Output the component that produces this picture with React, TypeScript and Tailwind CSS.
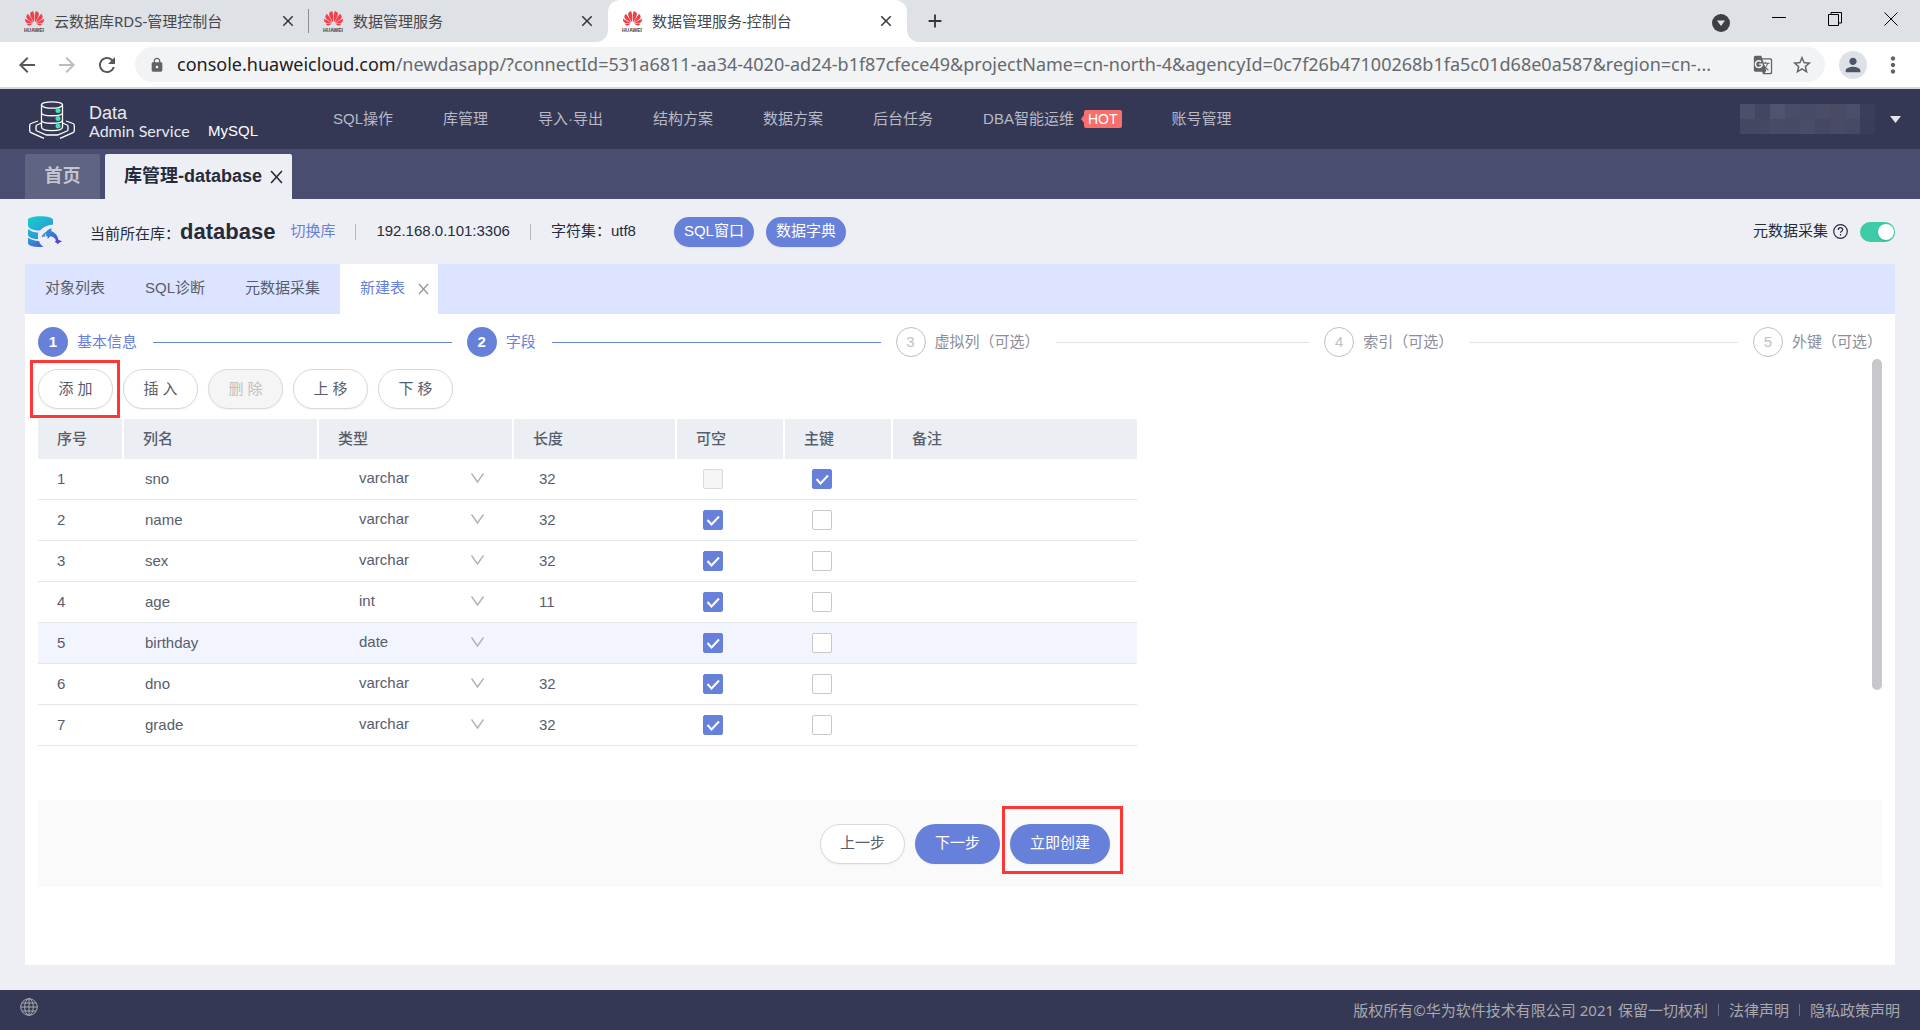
import { useState, type ReactNode } from 'react'
import { SiHuawei } from 'react-icons/si'
import {
  MdAdd,
  MdArrowBack,
  MdArrowForward,
  MdClose,
  MdGTranslate,
  MdLock,
  MdMoreVert,
  MdPerson,
  MdRefresh,
  MdStarBorder,
} from 'react-icons/md'

type Column = {
  name: string
  type: string
  length: string
  nullable: boolean
  primary: boolean
}

const initialColumns: Column[] = [
  { name: 'sno', type: 'varchar', length: '32', nullable: false, primary: true },
  { name: 'name', type: 'varchar', length: '32', nullable: true, primary: false },
  { name: 'sex', type: 'varchar', length: '32', nullable: true, primary: false },
  { name: 'age', type: 'int', length: '11', nullable: true, primary: false },
  { name: 'birthday', type: 'date', length: '', nullable: true, primary: false },
  { name: 'dno', type: 'varchar', length: '32', nullable: true, primary: false },
  { name: 'grade', type: 'varchar', length: '32', nullable: true, primary: false },
]

const steps = ['基本信息', '字段', '虚拟列（可选）', '索引（可选）', '外键（可选）']

function HuaweiMark() {
  return (
    <span className="flex w-5 shrink-0 flex-col items-center">
      <SiHuawei className="h-[19px] w-[19px] text-[#f0414b]" />
      <span className="font-['Liberation_Sans',sans-serif] text-[5px] leading-[5px] font-bold text-[#4a3c40]">HUAWEI</span>
    </span>
  )
}

function BrowserTab({ title, active, divider }: { title: string; active?: boolean; divider?: boolean }) {
  return (
    <div className={active ? 'relative flex w-[299px] items-center rounded-t-xl bg-white pl-[14px]' : 'relative flex w-[299px] items-center pl-[14px]'}>
      {active && (
        <>
          <svg className="absolute bottom-0 -left-3 h-3 w-3 text-white" viewBox="0 0 12 12">
            <path d="M12 0v12H0A12 12 0 0 0 12 0z" fill="currentColor" />
          </svg>
          <svg className="absolute -right-3 bottom-0 h-3 w-3 text-white" viewBox="0 0 12 12">
            <path d="M0 0v12h12A12 12 0 0 1 0 0z" fill="currentColor" />
          </svg>
        </>
      )}
      <HuaweiMark />
      <span className="ml-[10px] flex-1 text-[15px] text-[#45494d]">{title}</span>
      <button aria-label="关闭标签页" className="mr-[12px] text-[#33373a]">
        <MdClose className="h-[18px] w-[18px]" />
      </button>
      {divider && <span className="absolute right-0 h-6 w-px bg-[#8a8d91]" />}
    </div>
  )
}

function Browser() {
  return (
    <div className="border-b-2 border-[#d6d6d8] bg-white">
      <div className="flex h-[42px] bg-[#dee1e6] pl-[10px]">
        <BrowserTab title="云数据库RDS-管理控制台" divider />
        <BrowserTab title="数据管理服务" />
        <BrowserTab title="数据管理服务-控制台" active />
        <button aria-label="新标签页" className="ml-[17px] text-[#33373a]">
          <MdAdd className="h-[22px] w-[22px]" />
        </button>
        <div className="ml-auto flex items-center gap-[42px] pr-[22px] pb-1">
          <button aria-label="搜索标签页" className="mt-2">
            <svg className="h-[18px] w-[18px]" viewBox="0 0 18 18">
              <circle cx="9" cy="9" r="9" fill="#3c4043" />
              <path d="M5 6.500h8L9 12z" fill="#dee1e6" />
            </svg>
          </button>
          <button aria-label="最小化">
            <svg className="h-[14px] w-[14px]" viewBox="0 0 14 14" stroke="#000">
              <path d="M0 5.500h14" />
            </svg>
          </button>
          <button aria-label="还原">
            <svg className="h-[14px] w-[14px]" viewBox="0 0 14 14" fill="none" stroke="#000">
              <path d="M.5 2.500h10v11H.5zM3 2.500v-2h10.500V11H11" />
            </svg>
          </button>
          <button aria-label="关闭">
            <svg className="h-[14px] w-[14px]" viewBox="0 0 14 14" stroke="#000">
              <path d="M.5.5l13 13M13.500.5l-13 13" />
            </svg>
          </button>
        </div>
      </div>
      <div className="flex h-[45px] items-center pl-[15px]">
        <button aria-label="后退" className="text-[#55595e]">
          <MdArrowBack className="h-6 w-6" />
        </button>
        <button aria-label="前进" className="ml-4 text-[#babcbe]">
          <MdArrowForward className="h-6 w-6" />
        </button>
        <button aria-label="刷新" className="ml-4 text-[#55595e]">
          <MdRefresh className="h-6 w-6" />
        </button>
        <div className="ml-4 flex h-[35px] min-w-0 flex-1 items-center rounded-full bg-[#f1f3f4] pr-[12px] pl-[14px] text-[#5f6368]">
          <MdLock className="h-4 w-4 shrink-0" />
          <span className="ml-[12px] min-w-0 flex-1 truncate text-[18px] text-[#666a6e]">
            <span className="text-[#202124]">console.huaweicloud.com</span>
            /newdasapp/?connectId=531a6811-aa34-4020-ad24-b1f87cfece49&amp;projectName=cn-north-4&amp;agencyId=0c7f26b47100268b1fa5c01d68e0a587&amp;region=cn-...
          </span>
          <button aria-label="翻译此页">
            <MdGTranslate className="h-5 w-5" />
          </button>
          <button aria-label="收藏" className="ml-[18px]">
            <MdStarBorder className="h-[22px] w-[22px]" />
          </button>
        </div>
        <button aria-label="用户" className="ml-[14px] flex h-7 w-7 items-center justify-center rounded-full bg-[#dee1e6] text-[#4c5669]">
          <MdPerson className="h-[22px] w-[22px]" />
        </button>
        <button aria-label="更多" className="mr-[14px] ml-[13px] text-[#5f6368]">
          <MdMoreVert className="h-[26px] w-[26px]" />
        </button>
      </div>
    </div>
  )
}

function DasLogo() {
  return (
    <svg className="mt-[2px] h-[38px] w-[46px]" viewBox="0 0 46 38" fill="none" stroke="#fff" strokeWidth="1.300">
      <ellipse cx="23" cy="4" rx="10.500" ry="3.200" />
      <path d="M12.500 4v22c0 4.700 21 4.700 21 0V4M12.500 11.500c0 4.300 21 4.300 21 0M12.500 19c0 4.300 21 4.300 21 0" />
      <path d="M9 20l-7 2.500q-1.300.5-1.300 2v5q0 1.500 1.300 2.200L15 37.300M37 20l7 2.500q1.300.5 1.300 2v5q0 1.500-1.300 2.200L31 37.300" />
      <path d="M12.500 22L8 24q-1 .5-1 1.500v3q0 1 1 1.500l9.500 4h11L38 30q1-.5 1-1.500v-3q0-1-1-1.500l-4.500-2" />
      <g fill="#45e0b8" stroke="none">
        <circle cx="29" cy="9.500" r="2.500" />
        <circle cx="29" cy="17.500" r="2.500" />
        <circle cx="29" cy="25" r="2.500" />
      </g>
    </svg>
  )
}

// tiles of the pixelated account name, row by row
const mosaic = [
  ['bg-[#4c4f6b]', 'bg-[#434661]', 'bg-[#50536f]', 'bg-[#4a4c68]', 'bg-[#484a66]', 'bg-[#4a4d69]', 'bg-[#4b4a63]', 'bg-[#4b4e6a]', 'bg-[#3b3e5a]'],
  ['bg-[#444762]', 'bg-[#454862]', 'bg-[#484b66]', 'bg-[#474a65]', 'bg-[#4a4d68]', 'bg-[#454863]', 'bg-[#484b65]', 'bg-[#464964]', 'bg-[#3a3d59]'],
]

function TopNav() {
  return (
    <header className="flex h-[60px] items-center bg-[#343854] pr-[19px] pl-[29px] font-['Liberation_Sans','Noto_Sans_CJK_SC',sans-serif] text-[15px] text-[#b9bac5]">
      <DasLogo />
      <div className="ml-[14px] pt-[6px]">
        <p className="text-[18px] leading-[18px] text-[#e8e8ee]">Data</p>
        <p className="w-[119px] font-[Lato,sans-serif] text-[16px] leading-[18px] text-[#e8e8ee]">Admin Service</p>
      </div>
      <span className="mt-[24px] text-white">MySQL</span>
      <nav className="ml-[75px] flex items-center gap-[50px]">
        <a href="#sql">SQL操作</a>
        <a href="#db">库管理</a>
        <a href="#io">导入·导出</a>
        <a href="#structure">结构方案</a>
        <a href="#data">数据方案</a>
        <a href="#jobs">后台任务</a>
        <a href="#dba" className="flex items-center">
          DBA智能运维
          <span className="ml-[7px] h-0 w-0 border-y-4 border-r-3 border-y-transparent border-r-[#fa6e6b]" />
          <span className="rounded-xs bg-[#fa6e6b] px-1 text-[14px] leading-[18px] text-white">HOT</span>
        </a>
        <a href="#account">账号管理</a>
      </nav>
      <button aria-label="账号" className="ml-auto flex items-center">
        <span className="grid grid-cols-9">
          {mosaic.flat().map((tile, i) => (
            <span key={i} className={`h-[15px] w-[15px] ${tile}`} />
          ))}
        </span>
        <svg className="ml-[15px] h-[7px] w-[11px]" viewBox="0 0 11 7">
          <path d="M0 0h11L5.500 7z" fill="#e4e4ea" />
        </svg>
      </button>
    </header>
  )
}

function Cross({ className }: { className: string }) {
  return (
    <svg className={className} viewBox="0 0 12 14" fill="none" stroke="currentColor" strokeWidth="1.400" preserveAspectRatio="none">
      <path d="M1 1l10 12M11 1L1 13" />
    </svg>
  )
}

function PageTabs() {
  return (
    <div className="flex h-[50px] items-end gap-[5px] bg-[#494e70] pl-[25px] text-[18px] font-bold">
      <button className="h-[45px] w-[75px] rounded-t-xs bg-[#5f6482] text-[#c3c5d0]">首页</button>
      <div className="flex h-[45px] w-[187px] items-center justify-between rounded-t-xs bg-[#eeeff5] pr-[9px] pl-[19px] text-[#252b3a]">
        库管理-database
        <button aria-label="关闭">
          <Cross className="h-[14px] w-[13px]" />
        </button>
      </div>
    </div>
  )
}

function DolphinIcon() {
  return (
    <svg className="h-[32px] w-[34px]" viewBox="0 0 34 32">
      <defs>
        <linearGradient id="dolphin" gradientUnits="userSpaceOnUse" x1="4" y1="0" x2="22" y2="32">
          <stop offset="0" stopColor="#12cfcc" />
          <stop offset=".5" stopColor="#2d9fd6" />
          <stop offset="1" stopColor="#5340cf" />
        </linearGradient>
      </defs>
      <g fill="url(#dolphin)">
        <path d="M0 4C0-1 25-1 25 4v4.500C19 9 15 11 12 14.500 6 14.500 0 12.500 0 9.500z" />
        <path d="M0 13c3 2.500 6 3.300 10.500 3.800-.8 2.200-.8 4-.3 6.200C4 23 0 21 0 18.500z" />
        <path d="M0 21.500c3 2.500 6.500 3.200 11 3.400.8 2.500 2 4.100 4.500 6.100C7 31.500 0 30 0 27z" />
        <path d="M13.500 21.500c.5-2.500 2-4.500 4.500-5.500 1-2 3.500-3.300 6-3.500-.6 1-.8 1.700-.7 2.500 4 1.500 6.500 4.500 7.200 9 1.500.2 2.700.8 3.500 2-1.700 0-3.200.4-4.300 2.500-.6-1.400-1.700-2.300-3.200-2.500l1.500-1.500c-1-2.500-3-4-6-4.200-1 1.500-1.500 2.400-2.500 2.700.2-1 .2-1.900 0-2.700-2 0-4 .2-6 1.200z" />
      </g>
      <circle cx="17.500" cy="19" r=".8" fill="#fff" />
    </svg>
  )
}

function InfoBar({ collecting, onToggle }: { collecting: boolean; onToggle: () => void }) {
  return (
    <div className="flex h-[65px] items-center pl-[3px] text-[15px] text-[#252b3a]">
      <DolphinIcon />
      <div className="ml-[28px] flex items-baseline">
        <span className="w-[90px]">当前所在库：</span>
        <b className="text-[22px]">database</b>
      </div>
      <a href="#switch" className="ml-[15px] text-[#6781da]">切换库</a>
      <span className="mx-5 h-4 w-px bg-[#b4b6be]" />
      <span>192.168.0.101:3306</span>
      <span className="mx-5 h-4 w-px bg-[#b4b6be]" />
      <span>字符集：utf8</span>
      <button className="ml-[38px] h-[30px] w-[80px] rounded-full bg-[#6781da] text-white shadow-xs">SQL窗口</button>
      <button className="ml-[12px] h-[30px] w-[80px] rounded-full bg-[#6781da] text-white shadow-xs">数据字典</button>
      <label htmlFor="collect" className="ml-auto">元数据采集</label>
      <svg className="ml-[5px] h-[15px] w-[15px]" viewBox="0 0 15 15" fill="none" stroke="#252b3a" strokeWidth="1.200">
        <circle cx="7.500" cy="7.500" r="6.800" />
        <path d="M5.300 6c0-3 4.400-3 4.400-.3 0 1.500-2.200 1.500-2.200 3.100M7.500 10v1.400" />
      </svg>
      <span className="relative ml-[12px] flex">
        <input
          id="collect"
          type="checkbox"
          role="switch"
          checked={collecting}
          onChange={onToggle}
          className="peer h-5 w-[35px] appearance-none rounded-full bg-[#b4b6be] checked:bg-[#3dcca6]"
        />
        <span className="pointer-events-none absolute top-[2px] left-[2px] h-4 w-4 rounded-full bg-white shadow-sm peer-checked:left-[18px]" />
      </span>
    </div>
  )
}

function SubTabs() {
  return (
    <div className="flex h-[50px] bg-[#dde4ff] text-[15px] text-[#575d6c]">
      <button className="px-5 pb-[2px]">对象列表</button>
      <button className="px-5 pb-[2px]">SQL诊断</button>
      <button className="px-5 pb-[2px]">元数据采集</button>
      <div className="flex items-center bg-white pr-[9px] pb-[2px] pl-5 text-[#6781da]">
        新建表
        <button aria-label="关闭" className="mt-[2px] ml-[13px] text-[#8a8e99]">
          <Cross className="h-[12px] w-[11px]" />
        </button>
      </div>
    </div>
  )
}

function Steps({ current }: { current: number }) {
  return (
    <ol className="flex text-[15px]">
      {steps.map((title, i) => {
        const done = i <= current
        const last = i === steps.length - 1
        return (
          <li key={title} className={last ? 'flex items-center text-[#8a8e99]' : done ? 'flex flex-1 items-center text-[#6781da]' : 'flex flex-1 items-center text-[#8a8e99]'}>
            <span
              className={
                done
                  ? 'mr-[9px] flex h-[30px] w-[30px] items-center justify-center rounded-full bg-[#6781da] font-bold text-white'
                  : 'mr-[9px] flex h-[30px] w-[30px] items-center justify-center rounded-full border border-[#bfbfbf] text-[#bfbfbf]'
              }
            >
              {i + 1}
            </span>
            {title}
            {!last && <span className={done ? 'mr-[15px] ml-4 h-px flex-1 bg-[#6781da]' : 'mr-[15px] ml-4 h-px flex-1 bg-[#e4e4e4]'} />}
          </li>
        )
      })}
    </ol>
  )
}

function ToolButton({ children, disabled }: { children: ReactNode; disabled?: boolean }) {
  return (
    <button
      disabled={disabled}
      className="h-10 w-[75px] rounded-full border border-[#d9d9d9] bg-white text-[15px] text-[#575d6c] shadow-xs disabled:bg-[#f5f5f5] disabled:text-[#bfbfbf]"
    >
      {children}
    </button>
  )
}

function CheckBox({ label, checked, disabled, onChange }: { label: string; checked: boolean; disabled?: boolean; onChange: () => void }) {
  return (
    <span className="relative flex h-5 w-5">
      <input
        type="checkbox"
        aria-label={label}
        checked={checked}
        disabled={disabled}
        onChange={onChange}
        className="peer h-5 w-5 appearance-none rounded-xs border border-[#c8c8c8] bg-white checked:border-[#6781da] checked:bg-[#6781da] disabled:border-[#d9d9d9] disabled:bg-[#f5f5f5]"
      />
      <svg className="pointer-events-none absolute inset-0 hidden h-5 w-5 peer-checked:block" viewBox="0 0 20 20" fill="none" stroke="#fff" strokeWidth="2">
        <path d="M4.500 10l4 4.500 7.500-8" />
      </svg>
    </span>
  )
}

function ColumnTable() {
  const [columns, setColumns] = useState(initialColumns)

  function update(index: number, patch: Partial<Column>) {
    setColumns(columns.map((c, i) => (i === index ? { ...c, ...patch } : c)))
  }

  return (
    <table className="w-[1099px] table-fixed border-separate border-spacing-0 text-left text-[15px] text-[#575d6c]">
      <colgroup>
        <col className="w-[86px]" />
        <col className="w-[195px]" />
        <col className="w-[195px]" />
        <col className="w-[163px]" />
        <col className="w-[108px]" />
        <col className="w-[108px]" />
        <col />
      </colgroup>
      <thead>
        <tr className="h-10 bg-[#ebeef3]">
          {['序号', '列名', '类型', '长度', '可空', '主键', '备注'].map((title) => (
            <th key={title} className="border-r-2 border-white pl-[19px] font-medium last:border-r-0">
              {title}
            </th>
          ))}
        </tr>
      </thead>
      <tbody className="[&_td]:border-b [&_td]:border-[#e5e6e9]">
        {columns.map((c, i) => (
          <tr key={i} className={i === 4 ? 'h-[41px] bg-[#f2f5fe]' : 'h-[41px]'}>
            <td className="pl-[19px]">{i + 1}</td>
            <td className="pl-[21px]">
              <input aria-label="列名" className="w-[150px] bg-transparent outline-none" value={c.name} onChange={(e) => update(i, { name: e.target.value })} />
            </td>
            <td className="pb-[2px] pl-[40px]">
              <div className="flex items-center">
                <select
                  aria-label="类型"
                  className="w-[112px] appearance-none bg-transparent outline-none"
                  value={c.type}
                  onChange={(e) => update(i, { type: e.target.value })}
                >
                  <option>varchar</option>
                  <option>int</option>
                  <option>date</option>
                </select>
                <svg className="h-[10px] w-[13px]" viewBox="0 0 13 10" fill="none" stroke="#b0b3bb" strokeWidth="1.500">
                  <path d="M.5.5l6 8.500 6-8.500" />
                </svg>
              </div>
            </td>
            <td className="pl-[25px]">
              <input aria-label="长度" className="w-[110px] bg-transparent outline-none" value={c.length} onChange={(e) => update(i, { length: e.target.value })} />
            </td>
            <td className="pl-[26px]">
              <CheckBox label="可空" checked={c.nullable} disabled={c.primary} onChange={() => update(i, { nullable: !c.nullable })} />
            </td>
            <td className="pl-[27px]">
              <CheckBox label="主键" checked={c.primary} onChange={() => update(i, { primary: !c.primary, nullable: c.primary })} />
            </td>
            <td />
          </tr>
        ))}
      </tbody>
    </table>
  )
}

// red frame drawn around a control to point it out
function Marker({ className }: { className: string }) {
  return <span className={`pointer-events-none absolute border-3 border-[#ff3636] ${className}`} />
}

export default function App() {
  const [collecting, setCollecting] = useState(true)

  return (
    <div className="flex min-h-screen flex-col bg-[#eeeff5] font-['Liberation_Sans','Noto_Sans_CJK_SC',sans-serif]">
      <div className="font-['Noto_Sans','Noto_Sans_CJK_SC',sans-serif]">
        <Browser />
      </div>
      <TopNav />
      <PageTabs />

      <main className="flex flex-1 flex-col px-[25px] pb-[25px]">
        <InfoBar collecting={collecting} onToggle={() => setCollecting(!collecting)} />
        <section className="flex-1 bg-white">
          <SubTabs />
          <div className="px-[13px] pt-[13px]">
            <Steps current={1} />
            <div className="flex h-[443px] justify-between pt-[2px]">
              <div>
                <div className="my-[10px] flex gap-[10px]">
                  <div className="relative">
                    <ToolButton>添 加</ToolButton>
                    <Marker className="-top-[9px] -left-[8px] h-[58px] w-[90px]" />
                  </div>
                  <ToolButton>插 入</ToolButton>
                  <ToolButton disabled>删 除</ToolButton>
                  <ToolButton>上 移</ToolButton>
                  <ToolButton>下 移</ToolButton>
                </div>
                <ColumnTable />
              </div>
              <div className="h-[331px] w-[10px] rounded-full bg-[#c7c8cc]" />
            </div>
            <div className="flex h-[87px] items-center justify-center gap-[10px] bg-[#fafafa] pl-[10px] text-[15px]">
              <button className="h-10 w-[85px] rounded-full border border-[#d9d9d9] bg-white text-[#575d6c] shadow-xs">上一步</button>
              <button className="h-10 w-[85px] rounded-full bg-[#6781da] text-white shadow-xs">下一步</button>
              <div className="relative">
                <button className="h-10 w-[100px] rounded-full bg-[#6781da] text-white shadow-xs">立即创建</button>
                <Marker className="-top-[18px] -left-[8px] h-[68px] w-[121px]" />
              </div>
            </div>
          </div>
        </section>
      </main>

      <footer className="flex h-10 items-center bg-[#343854] px-[20px] font-['Noto_Sans','Noto_Sans_CJK_SC',sans-serif] text-[15px] text-[#a9a9ad]">
        <button aria-label="语言" className="mb-[6px]">
          <svg className="h-[18px] w-[18px]" viewBox="0 0 18 18" fill="none" stroke="currentColor">
            <circle cx="9" cy="9" r="8.300" />
            <ellipse cx="9" cy="9" rx="4.300" ry="8.300" />
            <path d="M9 .7v16.600M.7 9h16.600M2 5h14M2 13h14" />
          </svg>
        </button>
        <span className="ml-auto">版权所有©华为软件技术有限公司 2021 保留一切权利</span>
        <span className="mx-[10px] h-3 w-px bg-[#6d7087]" />
        <a href="#law">法律声明</a>
        <span className="mx-[10px] h-3 w-px bg-[#6d7087]" />
        <a href="#privacy">隐私政策声明</a>
      </footer>
    </div>
  )
}
